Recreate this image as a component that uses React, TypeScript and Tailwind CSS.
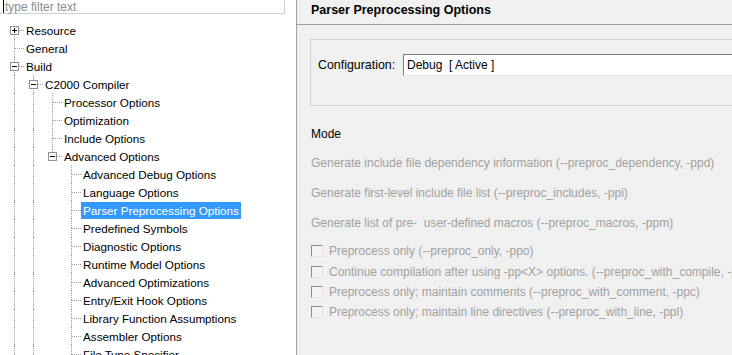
import React from "react";

type TreeNode = {
  level: number;
  label: string;
  expander?: "+" | "-";
  selected?: boolean;
};

const nodes: TreeNode[] = [
  { level: 0, label: "Resource", expander: "+" },
  { level: 0, label: "General" },
  { level: 0, label: "Build", expander: "-" },
  { level: 1, label: "C2000 Compiler", expander: "-" },
  { level: 2, label: "Processor Options" },
  { level: 2, label: "Optimization" },
  { level: 2, label: "Include Options" },
  { level: 2, label: "Advanced Options", expander: "-" },
  { level: 3, label: "Advanced Debug Options" },
  { level: 3, label: "Language Options" },
  { level: 3, label: "Parser Preprocessing Options", selected: true },
  { level: 3, label: "Predefined Symbols" },
  { level: 3, label: "Diagnostic Options" },
  { level: 3, label: "Runtime Model Options" },
  { level: 3, label: "Advanced Optimizations" },
  { level: 3, label: "Entry/Exit Hook Options" },
  { level: 3, label: "Library Function Assumptions" },
  { level: 3, label: "Assembler Options" },
  { level: 3, label: "File Type Specifier" },
  { level: 3, label: "Directory Specifier" },
  { level: 1, label: "C2000 Linker", expander: "+" },
  { level: 0, label: "Debug" },
];

// true when a later row sits at `level` before the tree climbs above it
function hasNextSibling(i: number, level: number) {
  for (let j = i + 1; j < nodes.length; j++) {
    if (nodes[j].level < level) return false;
    if (nodes[j].level === level) return true;
  }
  return false;
}

function Expander({ kind }: { kind: "+" | "-" }) {
  return (
    <svg width="9" height="9" className="absolute left-[5px] top-[5px]">
      <rect x="0.5" y="0.5" width="8" height="8" fill="#fff" stroke="#919191" />
      <path d="M2 4.5h5" stroke="#000" />
      {kind === "+" && <path d="M4.5 2v5" stroke="#000" />}
    </svg>
  );
}

function TreeRow({ node, index }: { node: TreeNode; index: number }) {
  const cols = Array.from({ length: node.level + 1 }, (_, c) => c);
  return (
    <div className="flex h-[18px] items-center pl-[5px]">
      {cols.map((c) => (
        <div key={c} className="relative h-full w-[19px] shrink-0">
          {c < node.level && hasNextSibling(index, c) && (
            <div className="absolute bottom-0 left-[9px] top-0 border-l border-dotted border-[#a0a0a0]" />
          )}
          {c === node.level && (
            <>
              {index > 0 && (
                <div className="absolute left-[9px] top-0 h-[9px] border-l border-dotted border-[#a0a0a0]" />
              )}
              {hasNextSibling(index, c) && (
                <div className="absolute bottom-0 left-[9px] top-[9px] border-l border-dotted border-[#a0a0a0]" />
              )}
              <div className="absolute left-[10px] right-0 top-[9px] border-t border-dotted border-[#a0a0a0]" />
              {node.expander && <Expander kind={node.expander} />}
            </>
          )}
        </div>
      ))}
      <span
        className={`h-[17px] whitespace-nowrap px-[2px] text-[11.7px] leading-[17px] ${
          node.selected ? "bg-[#3399ff] text-white" : "text-black"
        }`}
      >
        {node.label}
      </span>
    </div>
  );
}

function CheckRow({ label }: { label: string }) {
  return (
    <div className="flex h-[20.4px] items-center gap-[6px]">
      <span className="h-[12px] w-[12px] shrink-0 border border-b-[#e3e3e3] border-l-[#8a8a8a] border-r-[#e3e3e3] border-t-[#8a8a8a] bg-[#f4f4f4]" />
      <span className="whitespace-nowrap text-[#a0a0a0]">{label}</span>
    </div>
  );
}

export default function App() {
  return (
    <div className="flex h-[355px] w-[732px] overflow-hidden bg-white font-['Liberation_Sans',sans-serif] text-[12px]">
      {/* Left: filter + property tree */}
      <div className="flex w-[296px] shrink-0 flex-col">
        <div className="flex h-[16px] w-[285px] items-center border-b border-r border-[#cfcfcf] pl-[3px]">
          <span className="h-[13px] w-px bg-black" />
          <span className="pl-px leading-none text-[#8c8c8c]">type filter text</span>
        </div>
        <div className="pt-[7px]">
          {nodes.map((n, i) => (
            <TreeRow key={i} node={n} index={i} />
          ))}
        </div>
      </div>

      <div className="w-px shrink-0 bg-[#a0a0a0]" />

      {/* Right: property page */}
      <div className="flex min-w-0 flex-1 flex-col bg-[#f0f0f0]">
        <div className="flex h-[25px] shrink-0 items-center border-b border-[#a0a0a0] pb-[3px] pl-[14px] text-[12.5px] font-bold text-black">
          Parser Preprocessing Options
        </div>

        <div className="ml-[13px] mt-[14px] flex h-[67px] shrink-0 items-start border-y border-l border-[#d0d0d0] pl-[7px] pt-[14px]">
          <div className="flex h-[22px] w-full items-center">
            <span className="w-[85px] shrink-0 text-[12.4px] text-black">Configuration:</span>
            <div className="flex h-[22px] flex-1 items-center border-b border-l border-t border-b-[#e3e3e3] border-l-[#7a7a7a] border-t-[#7a7a7a] bg-white pl-[3px] text-black">
              Debug&nbsp;&nbsp;[ Active ]
            </div>
          </div>
        </div>

        <div className="flex flex-col pl-[14px]">
          <div className="mt-[20px] h-[16px] leading-[16px] text-black">Mode</div>
          <div className="mt-[13px] h-[16px] whitespace-nowrap leading-[16px] text-[#a0a0a0]">
            Generate include file dependency information (--preproc_dependency, -ppd)
          </div>
          <div className="mt-[14px] h-[16px] whitespace-nowrap leading-[16px] text-[#a0a0a0]">
            Generate first-level include file list (--preproc_includes, -ppi)
          </div>
          <div className="mt-[14px] h-[16px] whitespace-nowrap leading-[16px] text-[#a0a0a0]">
            Generate list of pre-&nbsp; user-defined macros (--preproc_macros, -ppm)
          </div>
          <div className="mt-[10px] flex flex-col">
            <CheckRow label="Preprocess only (--preproc_only, -ppo)" />
            <CheckRow label="Continue compilation after using -pp<X> options. (--preproc_with_compile, -ppa)" />
            <CheckRow label="Preprocess only; maintain comments (--preproc_with_comment, -ppc)" />
            <CheckRow label="Preprocess only; maintain line directives (--preproc_with_line, -ppl)" />
          </div>
        </div>
      </div>
    </div>
  );
}
